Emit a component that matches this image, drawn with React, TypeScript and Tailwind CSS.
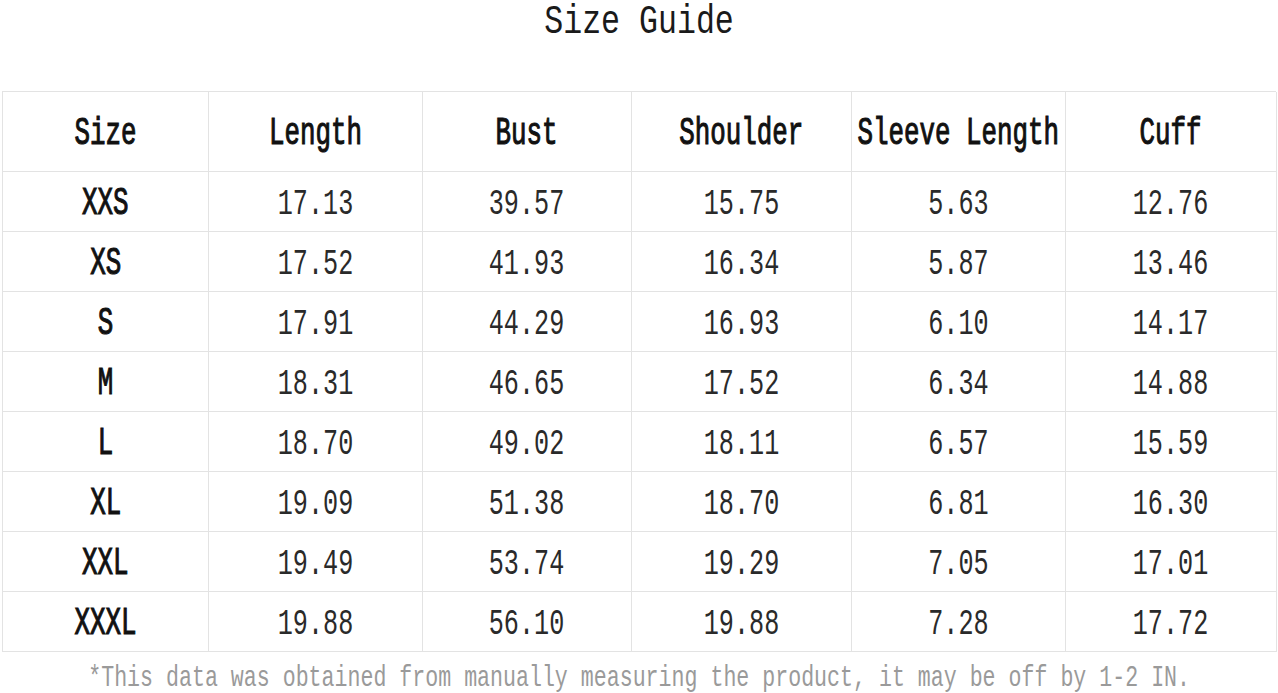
const headers = ['Size', 'Length', 'Bust', 'Shoulder', 'Sleeve Length', 'Cuff']

const rows = [
  ['XXS', '17.13', '39.57', '15.75', '5.63', '12.76'],
  ['XS', '17.52', '41.93', '16.34', '5.87', '13.46'],
  ['S', '17.91', '44.29', '16.93', '6.10', '14.17'],
  ['M', '18.31', '46.65', '17.52', '6.34', '14.88'],
  ['L', '18.70', '49.02', '18.11', '6.57', '15.59'],
  ['XL', '19.09', '51.38', '18.70', '6.81', '16.30'],
  ['XXL', '19.49', '53.74', '19.29', '7.05', '17.01'],
  ['XXXL', '19.88', '56.10', '19.88', '7.28', '17.72'],
]

function Cell({ text, head, first }: { text: string; head?: boolean; first?: boolean }) {
  return (
    <div
      className={`flex items-center justify-center overflow-visible border-r border-b border-[#e3e3e3] whitespace-nowrap ${
        head ? 'h-[80px] pt-[4px]' : 'h-[60px] pt-[5px]'
      }`}
    >
      <span
        className={`inline-block scale-x-[0.68] ${
          head || first
            ? 'text-[38px] text-[#111] [-webkit-text-stroke:1.1px_#111]'
            : 'text-[37px] text-[#2a2a2a]'
        }`}
      >
        {text}
      </span>
    </div>
  )
}

export default function App() {
  return (
    <div className="w-[1278px] bg-white font-['Liberation_Mono',monospace] leading-none">
      <div className="flex h-[44px] items-start justify-center pt-[3px]">
        <span className="inline-block scale-x-[0.79] text-[40px] text-[#1a1a1a]">Size Guide</span>
      </div>
      <div className="ml-[2px] mt-[47px] grid w-[1274px] grid-cols-[206px_214px_209px_220px_214px_211px] border-t border-l border-[#e3e3e3]">
        {headers.map((h) => (
          <Cell key={h} text={h} head />
        ))}
        {rows.map((r) =>
          r.map((v, i) => <Cell key={r[0] + i} text={v} first={i === 0} />)
        )}
      </div>
      <div className="flex h-[42px] items-end justify-center pb-[1px]">
        <span className="inline-block scale-x-[0.72] text-[30px] text-[#9a9a9a] whitespace-nowrap">
          *This data was obtained from manually measuring the product, it may be off by 1-2 IN.
        </span>
      </div>
    </div>
  )
}
